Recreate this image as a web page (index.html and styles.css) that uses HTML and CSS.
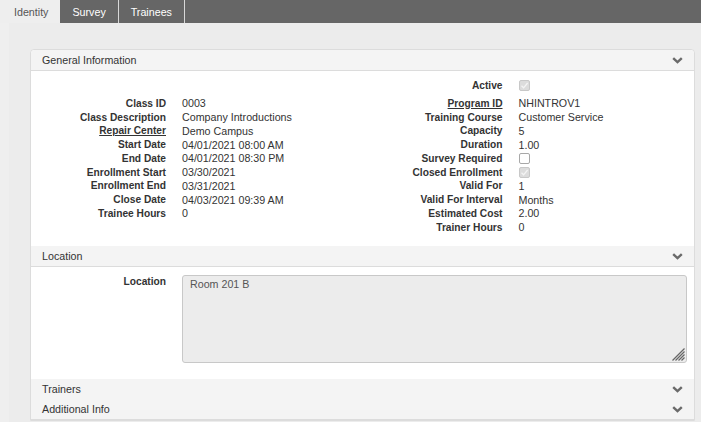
FILE: index.html
```html
<!DOCTYPE html>
<html lang="en">
<head>
    <meta charset="UTF-8">
    <meta name="viewport" content="width=device-width, initial-scale=1.0">
    <title>Class - Identity</title>
    <link rel="stylesheet" href="styles.css">
</head>
<body>
    <nav class="tabs">
        <a class="tab active">Identity</a>
        <a class="tab">Survey</a>
        <a class="tab">Trainees</a>
    </nav>
    <div class="content">
        <div class="panel">
            <div class="section-head">
                <span>General Information</span>
                <svg class="chevron" width="11" height="7" viewBox="0 0 11 7"><polyline points="1.2,1.2 5.5,5.2 9.8,1.2" /></svg>
            </div>
            <div class="fields">
                <div class="col">
                    <div class="field first"></div>
                    <div class="field"><span class="label">Class ID</span><span>0003</span></div>
                    <div class="field"><span class="label">Class Description</span><span>Company Introductions</span></div>
                    <div class="field"><span class="label link">Repair Center</span><span>Demo Campus</span></div>
                    <div class="field"><span class="label">Start Date</span><span>04/01/2021 08:00 AM</span></div>
                    <div class="field"><span class="label">End Date</span><span>04/01/2021 08:30 PM</span></div>
                    <div class="field"><span class="label">Enrollment Start</span><span>03/30/2021</span></div>
                    <div class="field"><span class="label">Enrollment End</span><span>03/31/2021</span></div>
                    <div class="field"><span class="label">Close Date</span><span>04/03/2021 09:39 AM</span></div>
                    <div class="field"><span class="label">Trainee Hours</span><span>0</span></div>
                </div>
                <div class="col right">
                    <div class="field first"><span class="label">Active</span><span class="check on"><svg width="9" height="9" viewBox="0 0 9 9"><polyline points="1.5,4.8 3.6,6.8 7.6,2" /></svg></span></div>
                    <div class="field"><span class="label link">Program ID</span><span>NHINTROV1</span></div>
                    <div class="field"><span class="label">Training Course</span><span>Customer Service</span></div>
                    <div class="field"><span class="label">Capacity</span><span>5</span></div>
                    <div class="field"><span class="label">Duration</span><span>1.00</span></div>
                    <div class="field"><span class="label">Survey Required</span><span class="check"></span></div>
                    <div class="field"><span class="label">Closed Enrollment</span><span class="check on"><svg width="9" height="9" viewBox="0 0 9 9"><polyline points="1.5,4.8 3.6,6.8 7.6,2" /></svg></span></div>
                    <div class="field"><span class="label">Valid For</span><span>1</span></div>
                    <div class="field"><span class="label">Valid For Interval</span><span>Months</span></div>
                    <div class="field"><span class="label">Estimated Cost</span><span>2.00</span></div>
                    <div class="field"><span class="label">Trainer Hours</span><span>0</span></div>
                </div>
            </div>

            <div class="section-head">
                <span>Location</span>
                <svg class="chevron" width="11" height="7" viewBox="0 0 11 7"><polyline points="1.2,1.2 5.5,5.2 9.8,1.2" /></svg>
            </div>
            <div class="location">
                <span class="label">Location</span>
                <div class="textbox">
                    Room 201 B
                    <svg class="grip" width="14" height="14" viewBox="0 0 14 14">
                        <line x1="13.5" y1="1.5" x2="1.5" y2="13.5" />
                        <line x1="13.5" y1="4.5" x2="4.5" y2="13.5" />
                        <line x1="13.5" y1="7.5" x2="7.5" y2="13.5" />
                        <line x1="13.5" y1="10.5" x2="10.5" y2="13.5" />
                    </svg>
                </div>
            </div>

            <div class="section-head collapsed">
                <span>Trainers</span>
                <svg class="chevron" width="11" height="7" viewBox="0 0 11 7"><polyline points="1.2,1.2 5.5,5.2 9.8,1.2" /></svg>
            </div>
            <div class="section-head collapsed">
                <span>Additional Info</span>
                <svg class="chevron" width="11" height="7" viewBox="0 0 11 7"><polyline points="1.2,1.2 5.5,5.2 9.8,1.2" /></svg>
            </div>
        </div>
    </div>
</body>
</html>
```

FILE: styles.css
```css
body {
    font-family: "Liberation Sans", Arial, sans-serif;
    margin: 0;
    padding: 0;
    background-color: #efefef;
    color: #333;
    font-size: 10.7px;
    height: 422px;
    overflow: hidden;
}
.tabs {
    display: flex;
    height: 23px;
    background-color: #666;
}
.tab {
    display: flex;
    align-items: center;
    padding: 0 12px;
    color: #fff;
    font-size: 10.7px;
    border-right: 1px solid #d8d8d8;
}
.tab.active {
    background-color: #eee;
    color: #555;
    padding: 0 12px 0 14px;
    border-right: none;
}
.content {
    margin-left: 9px;
    background-color: #ececec;
    height: 399px;
    padding: 26px 6px 0 21px;
    box-sizing: border-box;
}
.panel {
    background: white;
    border: 1px solid #dcdcdc;
    border-radius: 4px 4px 0 0;
}
.section-head {
    display: flex;
    justify-content: space-between;
    align-items: center;
    height: 20px;
    padding: 0 11px 0 11px;
    background-color: #f4f4f4;
    border-bottom: 1px solid #dcdcdc;
    color: #333;
    font-size: 10.7px;
}
.panel > .section-head:first-child {
    border-radius: 4px 4px 0 0;
}
.section-head.collapsed {
    border-bottom: none;
}
.section-head.collapsed:last-child {
    border-bottom: 1px solid #dcdcdc;
}
.chevron polyline {
    fill: none;
    stroke: #6a6a6a;
    stroke-width: 2.4;
}
.fields {
    display: flex;
    padding: 4px 0 12px 0;
}
.col {
    flex: 1;
}
.field {
    display: grid;
    grid-template-columns: 135px 1fr;
    column-gap: 16px;
    align-items: center;
    height: 13.75px;
}
.field.first {
    height: 21.5px;
}
.col.right .field {
    grid-template-columns: 140px 1fr;
}
.label {
    text-align: right;
    font-weight: bold;
    font-size: 10.2px;
    color: #333;
}
.link {
    text-decoration: underline;
}
.check {
    display: flex;
    align-items: center;
    justify-content: center;
    width: 11px;
    height: 11px;
    box-sizing: border-box;
    border: 1px solid #a8a8a8;
    border-radius: 2px;
    background: white;
}
.check.on {
    background: #dcdcdc;
    border-color: #c8c8c8;
}
.check polyline {
    fill: none;
    stroke: #f4f4f4;
    stroke-width: 1.3;
}
.location {
    display: grid;
    grid-template-columns: 135px 1fr;
    column-gap: 16px;
    padding: 8px 7px 16px 0;
}
.location .label {
    line-height: 14px;
}
.textbox {
    position: relative;
    height: 88px;
    box-sizing: border-box;
    padding: 1px 7px;
    line-height: 14px;
    background-color: #ececec;
    border: 1px solid #c8c8c8;
    border-radius: 3px;
    color: #555;
}
.grip {
    position: absolute;
    right: 1px;
    bottom: 1px;
}
.grip line {
    stroke: #666;
    stroke-width: 1.2;
}
```
